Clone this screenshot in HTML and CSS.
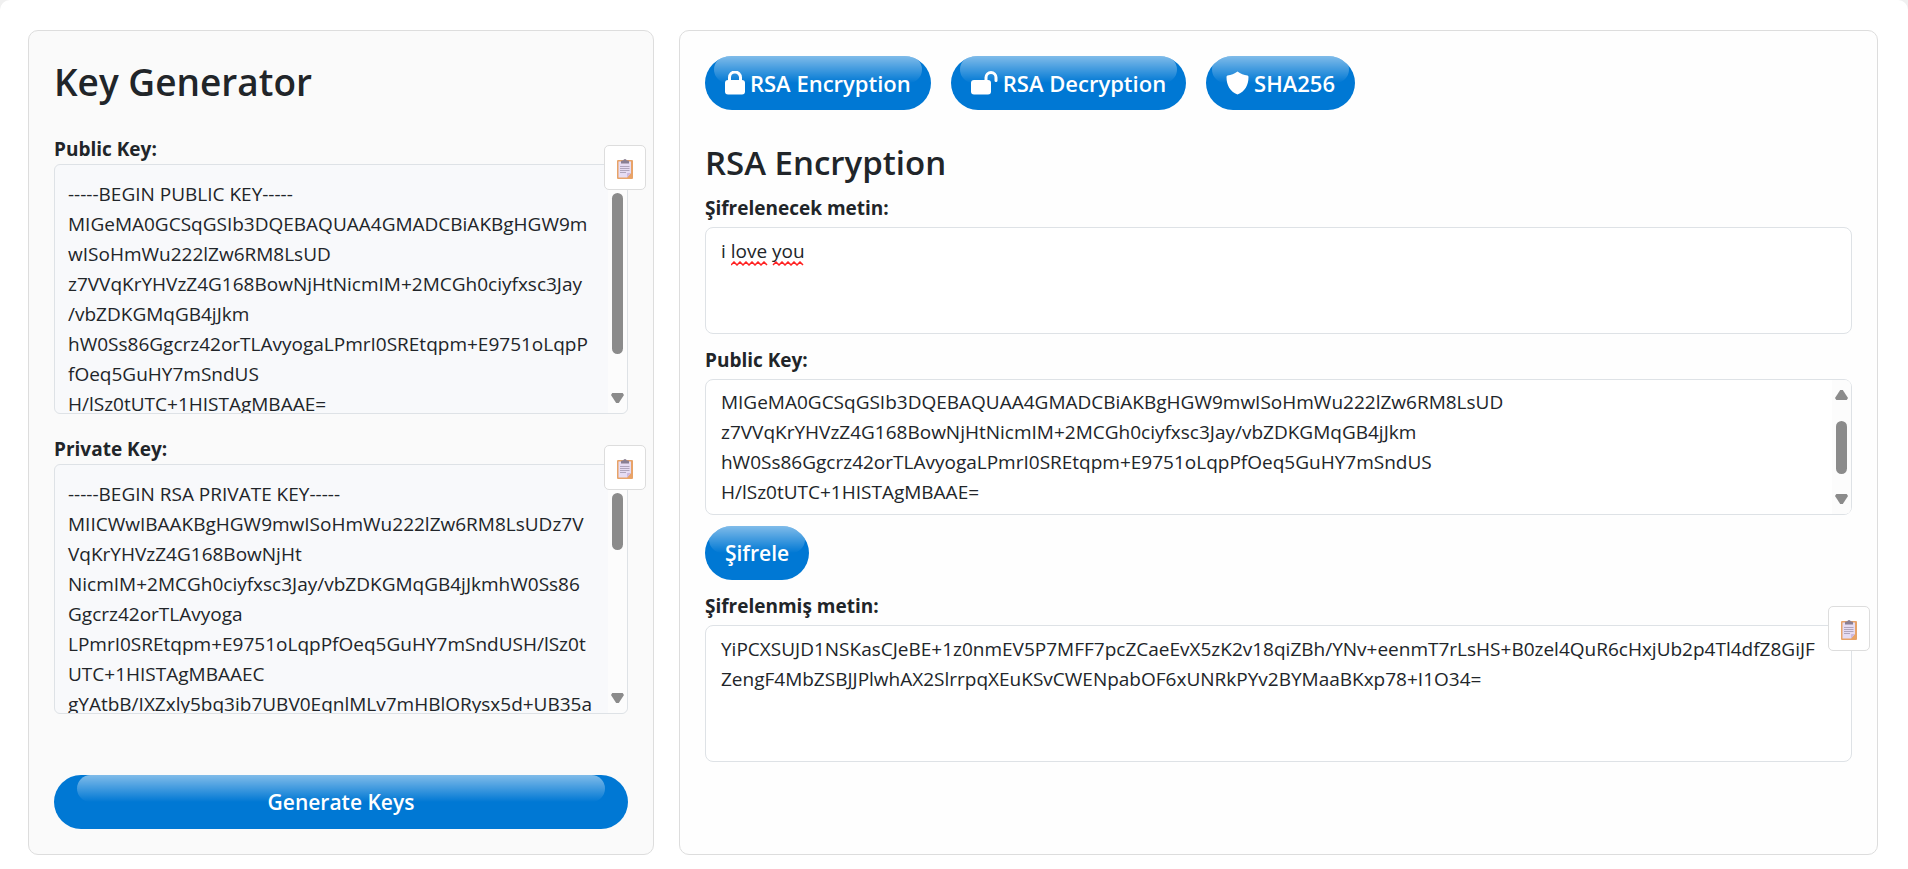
FILE: index.html
```html
<!DOCTYPE html>
<html lang="tr">
<head>
<meta charset="utf-8">
<meta name="viewport" content="width=device-width, initial-scale=1">
<title>Key Generator</title>
<link rel="stylesheet" href="styles.css">
</head>
<body>
<svg class="defs" aria-hidden="true">
  <symbol id="clipboard" viewBox="0 0 16 20">
    <rect x="0" y="1" width="16" height="19" rx="1" fill="#e8a368"/>
    <path d="M1.500 2.500h12.500v11.500l-4 4.500H1.500z" fill="#e6dcf2"/>
    <path d="M10 18.500v-4q0-.5.5-.5H14z" fill="#cdb9df"/>
    <path d="M4 4.500V2.500q0-1 1-1h1.200Q6.500 0 8 0t1.800 1.500H11q1 0 1 1v2z" fill="#8a7f92"/>
    <path d="M3 7.500h9.500M3 9.500h9.500M3 11.500h9.500M3 13.500h6" stroke="#b0a5bc" stroke-width="1"/>
  </symbol>
</svg>
<main class="layout">
  <section class="card card-keys">
    <h1 class="title">Key Generator</h1>
    <div class="key">
      <h2 class="label">Public Key:</h2>
      <div class="box-wrap">
        <pre class="key-box">-----BEGIN PUBLIC KEY-----
MIGeMA0GCSqGSIb3DQEBAQUAA4GMADCBiAKBgHGW9m
wISoHmWu222lZw6RM8LsUD
z7VVqKrYHVzZ4G168BowNjHtNicmIM+2MCGh0ciyfxsc3Jay
/vbZDKGMqGB4jJkm
hW0Ss86Ggcrz42orTLAvyogaLPmrI0SREtqpm+E9751oLqpP
fOeq5GuHY7mSndUS
H/lSz0tUTC+1HISTAgMBAAE=</pre>
        <div class="scrollbar" aria-hidden="true"><i class="arrow up"></i><i class="track"><b class="thumb thumb-long"></b></i><i class="arrow down"></i></div>
        <button class="copy" type="button" aria-label="Copy public key"><svg class="clip"><use href="#clipboard"/></svg></button>
      </div>
    </div>
    <div class="key">
      <h2 class="label">Private Key:</h2>
      <div class="box-wrap">
        <pre class="key-box">-----BEGIN RSA PRIVATE KEY-----
MIICWwIBAAKBgHGW9mwISoHmWu222lZw6RM8LsUDz7V
VqKrYHVzZ4G168BowNjHt
NicmIM+2MCGh0ciyfxsc3Jay/vbZDKGMqGB4jJkmhW0Ss86
Ggcrz42orTLAvyoga
LPmrI0SREtqpm+E9751oLqpPfOeq5GuHY7mSndUSH/lSz0t
UTC+1HISTAgMBAAEC
gYAtbB/IXZxly5bq3ib7UBV0EqnlMLv7mHBlORysx5d+UB35a</pre>
        <div class="scrollbar" aria-hidden="true"><i class="arrow up"></i><i class="track"><b class="thumb thumb-short"></b></i><i class="arrow down"></i></div>
        <button class="copy" type="button" aria-label="Copy private key"><svg class="clip"><use href="#clipboard"/></svg></button>
      </div>
    </div>
    <button class="btn btn-generate" type="button">Generate Keys</button>
  </section>

  <section class="card card-tools">
    <nav class="tabs">
      <button class="btn" type="button"><svg class="icon" width="20" height="24" viewBox="0 0 20 24"><path d="M4.500 10V6.500a5.500 5.500 0 0 1 11 0V10" fill="none" stroke="#fff" stroke-width="3"/><rect y="9" width="20" height="14.500" rx="3" fill="#fff"/></svg>RSA Encryption</button>
      <button class="btn" type="button"><svg class="icon" width="27" height="24" viewBox="0 0 27 24"><path d="M15 10V6.500a5 5 0 0 1 10 0V9.500" fill="none" stroke="#fff" stroke-width="3" stroke-linecap="round"/><rect y="9" width="20" height="14.500" rx="3" fill="#fff"/></svg>RSA Decryption</button>
      <button class="btn" type="button"><svg class="icon" width="23" height="24" viewBox="0 0 23 24"><path d="M11.500.5C14.500 2.800 18 4 21.500 4.500q1 .3 1 1.500C22.500 14 19 20.500 11.500 23.500 4 20.500.5 14 .5 6q0-1.200 1-1.500C5 4 8.500 2.800 11.500.5z" fill="#fff"/></svg>SHA256</button>
    </nav>
    <h2 class="subtitle">RSA Encryption</h2>

    <label class="label" for="plain">Şifrelenecek metin:</label>
    <div class="box-wrap field">
      <textarea class="input input-plain" id="plain" spellcheck="false">i love you</textarea>
      <svg class="squiggle" width="76" height="5" aria-hidden="true"><path d="M0 4l3-3 3 3 3-3 3 3 3-3 3 3 3-3 3 3 3-3 3 3 3-3 3 3M42 4l3-3 3 3 3-3 3 3 3-3 3 3 3-3 3 3 3-3 3 3" fill="none" stroke="#f22" stroke-width="1.500"/></svg>
    </div>

    <label class="label" for="pub">Public Key:</label>
    <div class="box-wrap field">
      <textarea class="input input-key" id="pub" spellcheck="false">MIGeMA0GCSqGSIb3DQEBAQUAA4GMADCBiAKBgHGW9mwISoHmWu222lZw6RM8LsUD
z7VVqKrYHVzZ4G168BowNjHtNicmIM+2MCGh0ciyfxsc3Jay/vbZDKGMqGB4jJkm
hW0Ss86Ggcrz42orTLAvyogaLPmrI0SREtqpm+E9751oLqpPfOeq5GuHY7mSndUS
H/lSz0tUTC+1HISTAgMBAAE=</textarea>
      <div class="scrollbar" aria-hidden="true"><i class="arrow up"></i><i class="track"><b class="thumb thumb-mid"></b></i><i class="arrow down"></i></div>
    </div>

    <button class="btn btn-submit" type="button">Şifrele</button>

    <label class="label" for="cipher">Şifrelenmiş metin:</label>
    <div class="box-wrap field">
      <textarea class="input input-result" id="cipher" spellcheck="false" readonly>YiPCXSUJD1NSKasCJeBE+1z0nmEV5P7MFF7pcZCaeEvX5zK2v18qiZBh/YNv+eenmT7rLsHS+B0zel4QuR6cHxjUb2p4Tl4dfZ8GiJF
ZengF4MbZSBJJPlwhAX2SlrrpqXEuKSvCWENpabOF6xUNRkPYv2BYMaaBKxp78+I1O34=</textarea>
      <button class="copy" type="button" aria-label="Copy encrypted text"><svg class="clip"><use href="#clipboard"/></svg></button>
    </div>
  </section>
</main>
</body>
</html>
```
FILE: styles.css
```css
* {
  box-sizing: border-box;
}

body {
  margin: 0;
  background: #f0f0f0;
  color: #212529;
  font: 19px/30px "Open Sans", "Noto Sans", sans-serif;
}

.defs {
  position: absolute;
  width: 0;
  height: 0;
}

.layout {
  display: grid;
  grid-template-columns: minmax(0, 343fr) minmax(0, 657fr);
  gap: 25px;
  min-height: 100vh;
  padding: 30px 30px 14px 28px;
  background: #fff;
  border-radius: 10px 10px 0 0;
}

.card {
  display: flex;
  flex-direction: column;
  padding: 25px;
  border: 1px solid #ddd;
  border-radius: 10px;
}

.card-keys {
  background: #fafafa;
}

.card-tools {
  background: #fefefe;
}

.title {
  margin: 0 0 27px;
  font-size: 37px;
  font-weight: 600;
  line-height: 51px;
}

.subtitle {
  margin: 32px 0 9px;
  font-size: 33px;
  font-weight: 600;
  line-height: 42px;
}

.label {
  display: block;
  margin: 0;
  font-size: 19px;
  font-weight: 700;
  line-height: 30px;
}

.key {
  margin-bottom: 20px;
}

.box-wrap {
  position: relative;
}

.key-box {
  height: 250px;
  margin: 0;
  padding: 14px 13px;
  overflow: hidden;
  background: #f8f9fb;
  border: 1px solid #dee2e6;
  border-radius: 6px;
  font: inherit;
}

.field {
  margin: 4px 0 11px;
}

.input {
  display: block;
  width: 100%;
  padding: 8px 15px;
  overflow: hidden;
  resize: none;
  white-space: pre;
  background: #fff;
  border: 1px solid #dee2e6;
  border-radius: 8px;
  color: inherit;
  font: inherit;
}

.input-plain {
  height: 107px;
}

.input-key {
  height: 136px;
  padding-top: 7px;
}

.input-result {
  height: 137px;
}

.squiggle {
  position: absolute;
  top: 34px;
  left: 26px;
}

.scrollbar {
  position: absolute;
  top: 1px;
  right: 1px;
  bottom: 1px;
  display: flex;
  flex-direction: column;
  align-items: center;
  justify-content: space-between;
  width: 19px;
  padding: 10px 0;
  background: #fcfcfc;
  border-radius: 0 6px 6px 0;
}

.arrow {
  width: 13px;
  height: 10px;
  background: #8b8b8b;
}

.up {
  clip-path: polygon(40% 0, 60% 0, 100% 80%, 90% 100%, 10% 100%, 0 80%);
}

.down {
  clip-path: polygon(10% 0, 90% 0, 100% 20%, 60% 100%, 40% 100%, 0 20%);
}

.track {
  flex: 1;
  width: 11px;
  padding: 8px 0;
}

.thumb {
  display: block;
  background: #8b8b8b;
  border-radius: 6px;
}

.thumb-long {
  height: 161px;
}

.thumb-short {
  height: 57px;
}

.thumb-mid {
  height: 53px;
  margin-top: 13px;
}

.copy {
  position: absolute;
  top: -19px;
  right: -18px;
  display: grid;
  place-items: center;
  width: 42px;
  height: 45px;
  padding: 3px 0 0;
  background: #fff;
  border: 1px solid #ddd;
  border-radius: 5px;
}

.clip {
  width: 16px;
  height: 20px;
}

.tabs {
  display: flex;
  flex-wrap: wrap;
  gap: 20px;
}

.btn {
  position: relative;
  display: inline-flex;
  align-items: center;
  justify-content: center;
  gap: 5px;
  height: 54px;
  padding: 0 20px;
  background: #0078d4;
  border: 0;
  border-radius: 27px;
  color: #fff;
  font: 600 21px/34px "Open Sans", "Noto Sans", sans-serif;
  overflow: hidden;
}

.btn::before {
  content: "";
  position: absolute;
  top: 0;
  left: 4%;
  width: 92%;
  height: 50%;
  background: linear-gradient(rgba(255, 255, 255, 0.5), rgba(255, 255, 255, 0));
  border-radius: 14px;
}

.tabs .btn {
  font-size: 22px;
}

.tabs .btn::before,
.btn-submit::before {
  border-radius: 20px;
}

.btn-generate {
  margin-top: auto;
}

.btn-submit {
  align-self: flex-start;
  margin-bottom: 11px;
}

.icon {
  flex: none;
}
```
